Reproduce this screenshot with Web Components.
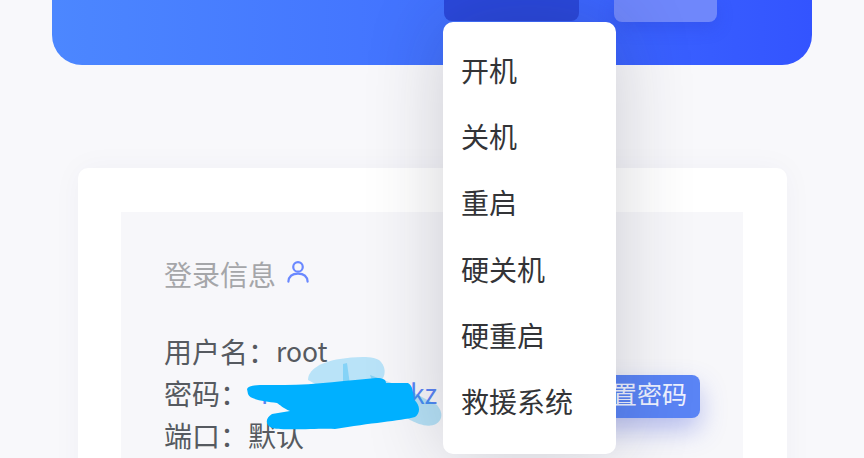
<!DOCTYPE html>
<html lang="zh">
<head>
<meta charset="utf-8">
<title>服务器详情</title>
<style>
  html, body { margin: 0; height: 458px; overflow: hidden; }
  body { background: #f8f8fb; font-family: "Noto Sans CJK SC", "Noto Sans", sans-serif; }
</style>
</head>
<body>
<server-page>
  <hero-banner></hero-banner>
  <info-card>
    <login-info></login-info>
  </info-card>
  <power-menu></power-menu>
  <scribble-mark></scribble-mark>
</server-page>

<script>
class ServerPage extends HTMLElement {
    constructor() {
        super();
        this.attachShadow({ mode: 'open' });
        this.shadowRoot.innerHTML = `
            <style>
                :host {
                    display: block;
                    position: relative;
                    height: 458px;
                    overflow: hidden;
                    padding: 0 52px;
                }
            </style>
            <slot></slot>
        `;
    }
}

class HeroBanner extends HTMLElement {
    constructor() {
        super();
        this.attachShadow({ mode: 'open' });
        this.shadowRoot.innerHTML = `
            <style>
                :host {
                    display: flex;
                    gap: 35px;
                    height: 65px;
                    width: 760px;
                    padding-left: 392px;
                    box-sizing: border-box;
                    background: linear-gradient(90deg, #4c87ff 0%, #4272ff 50%, #3354ff 100%);
                    border-radius: 0 0 30px 30px;
                }
                .btn { border-radius: 0 0 8px 8px; }
                .dark { width: 135px; height: 21px; background: #2a48dc; }
                .light { width: 103px; height: 22px; background: #6f87fb; box-shadow: 0 6px 16px rgba(40,60,200,.25); }
            </style>
            <div class="btn dark"></div>
            <div class="btn light"></div>
        `;
    }
}

class InfoCard extends HTMLElement {
    constructor() {
        super();
        this.attachShadow({ mode: 'open' });
        this.shadowRoot.innerHTML = `
            <style>
                :host {
                    display: block;
                    width: 709px;
                    height: 400px;
                    box-sizing: border-box;
                    margin: 103px 0 0 26px;
                    padding: 44px 44px 0 43px;
                    background: #fff;
                    border-radius: 10px;
                    box-shadow: 0 0 30px rgba(60,60,110,.04);
                }
            </style>
            <slot></slot>
        `;
    }
}

class LoginInfo extends HTMLElement {
    constructor() {
        super();
        this.attachShadow({ mode: 'open' });
        this.shadowRoot.innerHTML = `
            <style>
                :host {
                    display: block;
                    height: 300px;
                    box-sizing: border-box;
                    padding: 41px 43px 0;
                    background: #f7f7fa;
                    font-size: 28px;
                    color: #565a60;
                }
                .title {
                    display: flex;
                    align-items: center;
                    gap: 11px;
                    height: 42px;
                    color: #a5a6a9;
                    margin-bottom: 35px;
                }
                .title svg { width: 22px; height: 23px; margin-top: -6px; }
                .row { display: flex; align-items: center; height: 42px; line-height: 42px; white-space: nowrap; }
                .latin { font-size: 26.5px; }
                .pw {
                    display: flex;
                    justify-content: space-between;
                    width: 176px;
                    padding-left: 13px;
                    color: #5a84f5;
                    font-size: 26.5px;
                }
                .reset {
                    margin: 7px 0 0 137px;
                    height: 43px;
                    line-height: 37px;
                    padding: 0 13px;
                    font-size: 25px;
                    color: #eef2ff;
                    background: #5a84f5;
                    border-radius: 8px;
                    box-shadow: 0 12px 26px rgba(70,90,220,.35);
                }
            </style>
            <div class="title">
                <span>登录信息</span>
                <svg viewBox="0 0 24 24" fill="none" stroke="#6a88ff" stroke-width="2.4" stroke-linecap="round">
                    <circle cx="12" cy="7" r="5.200"></circle>
                    <path d="M1.500 23c.5-5.800 4.800-8.700 10.500-8.700s10 2.900 10.500 8.700"></path>
                </svg>
            </div>
            <div class="row"><span>用户名：</span><span class="latin">root</span></div>
            <div class="row"><span>密码：</span><span class="pw"><span>r</span><span>kz</span></span><span class="reset">重置密码</span></div>
            <div class="row"><span>端口：</span><span>默认</span></div>
        `;
    }
}

class PowerMenu extends HTMLElement {
    constructor() {
        super();
        this.attachShadow({ mode: 'open' });
        const items = ['开机', '关机', '重启', '硬关机', '硬重启', '救援系统'];
        this.shadowRoot.innerHTML = `
            <style>
                :host {
                    position: absolute;
                    left: 443px;
                    top: 22px;
                    width: 173px;
                    height: 432px;
                    box-sizing: border-box;
                    padding: 15px 18px;
                    background: #fff;
                    border-radius: 10px;
                    box-shadow: 0 0 80px rgba(30,30,50,.2);
                    font-size: 28px;
                    color: #333437;
                }
                .item { height: 66.2px; line-height: 66px; white-space: nowrap; }
            </style>
            ${items.map(t => `<div class="item">${t}</div>`).join('')}
        `;
    }
}

// the hand drawn blue mark over the password
class ScribbleMark extends HTMLElement {
    constructor() {
        super();
        this.attachShadow({ mode: 'open' });
        this.shadowRoot.innerHTML = `
            <style>
                :host { position: absolute; left: 0; top: 0; width: 864px; height: 458px; pointer-events: none; }
                svg { display: block; }
            </style>
            <svg width="864" height="458" viewBox="0 0 864 458">
                <path d="M308 380C308 370 320 362 340 359C355 357 375 355 381 362C386 368 385 374 383 378L330 392Z" fill="#00a8f5" fill-opacity=".25"></path>
                <path d="M343 364L347 363L350 385L343 385Z" fill="#00a8f5" fill-opacity=".28"></path>
                <path d="M370 375L405 388L437 405C443 412 443 420 436 424C428 428 418 424 410 420L380 400Z" fill="#0a9fe0" fill-opacity=".28"></path>
                <path d="M247 389C249 384 262 385 285 385C315 385 350 380 376 378C384 378 386 380 386 383L408 383C413 386 413 392 414 400C420 404 421 413 415 417C400 421 370 423 335 429C320 428 285 431 272 428C265 425 265 418 272 414L290 411C283 408 280 405 277 403C265 401 250 400 248 394Z" fill="#00b0ff"></path>
            </svg>
        `;
    }
}

customElements.define('server-page', ServerPage);
customElements.define('hero-banner', HeroBanner);
customElements.define('info-card', InfoCard);
customElements.define('login-info', LoginInfo);
customElements.define('power-menu', PowerMenu);
customElements.define('scribble-mark', ScribbleMark);
</script>
</body>
</html>
